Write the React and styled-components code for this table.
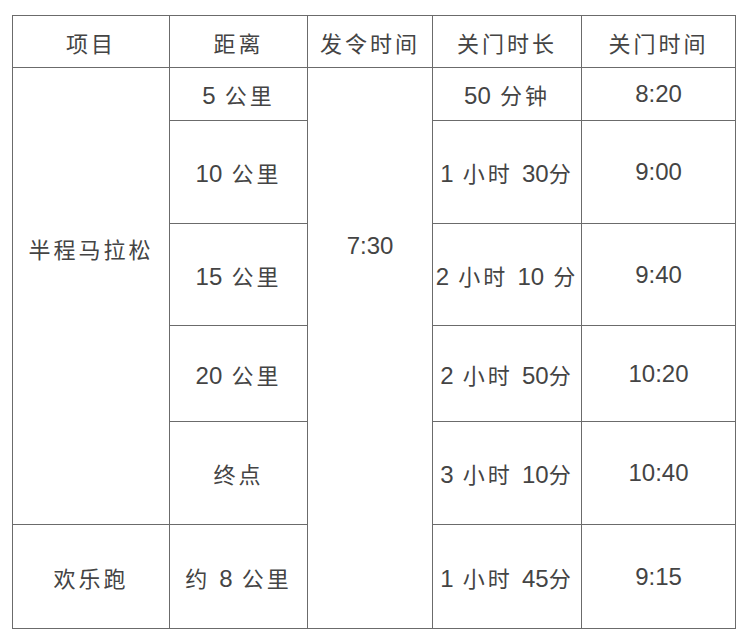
import React from 'react'
import styled, { createGlobalStyle } from 'styled-components'

//#region styled css
const GlobalStyle = createGlobalStyle`
    body {
        margin: 0;
        background: #fff;
    }
`;

const Page = styled.div`
    padding: 15px 0 0 12px;
    width: 742px;
    height: 640px;
    box-sizing: border-box;
    background: #fff;
`;

const Table = styled.table`
    border-collapse: collapse;
    table-layout: fixed;
    width: 723px;
    font-family: "Liberation Sans", "Noto Sans CJK SC", sans-serif;
    font-size: 22px;
    color: #444;
`;

const Row = styled.tr`
    height: ${props => props.h}px;
`;

const Cell = styled.td`
    border: 1.5px solid #6b6b6b;
    padding: 0;
    text-align: center;
    vertical-align: ${props => (props.top ? 'top' : 'middle')};
    padding-top: ${props => (props.top ? '164px' : '0')};
    letter-spacing: 3px;
    white-space: nowrap;
`;

const Head = styled(Cell).attrs({ as: 'th' })`
    font-weight: normal;
`;

const Num = styled.span`
    font-size: 24px;
    letter-spacing: 0;
`;
//#endregion

const widths = [157, 138, 125, 149, 154];
const headers = ["项目", "距离", "发令时间", "关门时长", "关门时间"];

const halfRows = [
    { h: 53, dist: "5 公里", length: "50 分钟", close: "8:20" },
    { h: 103, dist: "10 公里", length: "1 小时 30分", close: "9:00" },
    { h: 102, dist: "15 公里", length: "2 小时 10 分", close: "9:40" },
    { h: 96, dist: "20 公里", length: "2 小时 50分", close: "10:20" },
    { h: 103, dist: "终点", length: "3 小时 10分", close: "10:40" },
];

// digits get their own span so they stay tight while the hanzi keep their spacing
function Text({ children }) {
    return children.split(/([\d:]+)/).map((part, i) =>
        /\d/.test(part) ? <Num key={i}>{part}</Num> : part
    );
}

function App() {
    return (
        <Page>
            <GlobalStyle />
            <Table>
                <colgroup>
                    {widths.map((w, i) => <col key={i} style={{ width: w }} />)}
                </colgroup>
                <thead>
                    <Row h={52}>
                        {headers.map(t => <Head key={t}>{t}</Head>)}
                    </Row>
                </thead>
                <tbody>
                    {halfRows.map((r, i) => (
                        <Row h={r.h} key={r.dist}>
                            {i === 0 && <Cell rowSpan={5} top>半程马拉松</Cell>}
                            <Cell><Text>{r.dist}</Text></Cell>
                            {i === 0 && <Cell rowSpan={6} top><Text>7:30</Text></Cell>}
                            <Cell><Text>{r.length}</Text></Cell>
                            <Cell><Text>{r.close}</Text></Cell>
                        </Row>
                    ))}
                    <Row h={104}>
                        <Cell>欢乐跑</Cell>
                        <Cell><Text>约 8 公里</Text></Cell>
                        <Cell><Text>1 小时 45分</Text></Cell>
                        <Cell><Text>9:15</Text></Cell>
                    </Row>
                </tbody>
            </Table>
        </Page>
    )
}

export default App
